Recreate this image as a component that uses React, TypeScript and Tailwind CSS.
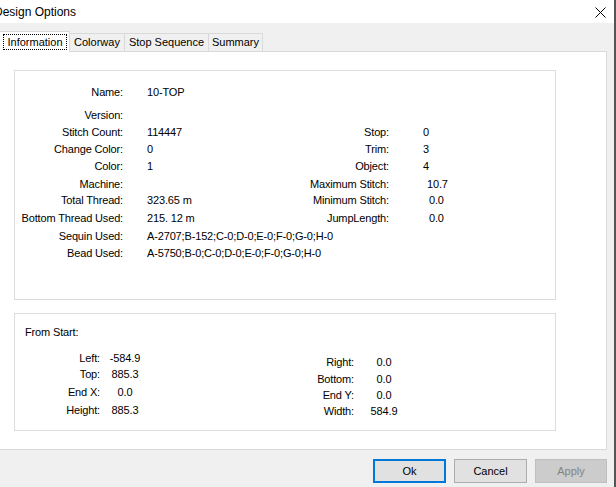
import React from "react";

const F = "font-[family-name:Liberation_Sans,Arial,sans-serif]";

type Row = { l: string; v: string; h: number; rl?: string; rv?: string; rvm?: number };

const rows: Row[] = [
  { l: "Name:", v: "10-TOP", h: 23 },
  { l: "Version:", v: "", h: 17 },
  { l: "Stitch Count:", v: "114447", h: 17, rl: "Stop:", rv: "0", rvm: 0 },
  { l: "Change Color:", v: "0", h: 17, rl: "Trim:", rv: "3", rvm: 0 },
  { l: "Color:", v: "1", h: 18, rl: "Object:", rv: "4", rvm: 0 },
  { l: "Machine:", v: "", h: 16, rl: "Maximum Stitch:", rv: "10.7", rvm: 4 },
  { l: "Total Thread:", v: "323.65 m", h: 18, rl: "Minimum Stitch:", rv: "0.0", rvm: 6 },
  { l: "Bottom Thread Used:", v: "215. 12 m", h: 18, rl: "JumpLength:", rv: "0.0", rvm: 6 },
  { l: "Sequin Used:", v: "A-2707;B-152;C-0;D-0;E-0;F-0;G-0;H-0", h: 17 },
  { l: "Bead Used:", v: "A-5750;B-0;C-0;D-0;E-0;F-0;G-0;H-0", h: 17 },
];

function CloseIcon() {
  return (
    <svg width="11" height="11" viewBox="0 0 11 11">
      <path d="M0.5 0.5 L10.5 10.5 M10.5 0.5 L0.5 10.5" stroke="#000" strokeWidth="1" fill="none" />
    </svg>
  );
}

export default function App() {
  return (
    <div className={`${F} w-[616px] h-[487px] bg-[#f0f0f0] border-r-2 border-[#555555] flex flex-col text-[11px] text-black overflow-hidden`}>
      {/* title bar */}
      <div className="h-[23px] bg-white flex items-center justify-between shrink-0">
        <span className="ml-[-6px] text-[12px] leading-none">Design Options</span>
        <span className="mr-[8px] mt-[1px] flex"><CloseIcon /></span>
      </div>

      {/* tabs */}
      <div className="h-[28px] flex items-end shrink-0">
        <div className="relative z-10 mb-[-1px] h-[21px] w-[70px] bg-white border-t border-r border-[#d9d9d9] flex items-start pt-[2px] pl-[3px]">
          <div className="border border-dotted border-black h-[16px] w-[64px] flex items-center justify-center leading-none">
            Information
          </div>
        </div>
        <div className="h-[18px] w-[55px] border-t border-r border-[#d9d9d9] flex items-center justify-center leading-none">Colorway</div>
        <div className="h-[18px] w-[84px] border-t border-r border-[#d9d9d9] flex items-center justify-center leading-none">Stop Sequence</div>
        <div className="h-[18px] w-[54px] border-t border-r border-[#d9d9d9] flex items-center justify-center leading-none">Summary</div>
      </div>

      {/* tab page */}
      <div className="w-[607px] h-[399px] bg-white border-t border-r border-b border-[#d9d9d9] shrink-0 flex flex-col pl-[14px] pt-[18px] tracking-[-0.15px]">
        {/* group 1 */}
        <div className="w-[542px] h-[230px] shrink-0 border border-[#dcdcdc] flex flex-col pt-[13px]">
          {rows.map((r, i) => (
            <div key={i} className="flex items-start leading-[17px]" style={{ height: r.h }}>
              <div className="w-[108px] text-right whitespace-nowrap">{r.l}</div>
              <div className="ml-[24px] w-[150px] whitespace-nowrap">{r.v}</div>
              {r.rl && (
                <>
                  <div className="w-[92px] text-right whitespace-nowrap">{r.rl}</div>
                  <div className="whitespace-nowrap" style={{ marginLeft: 34 + (r.rvm ?? 0) }}>{r.rv}</div>
                </>
              )}
            </div>
          ))}
        </div>

        {/* group 2 */}
        <div className="mt-[13px] w-[542px] h-[118px] shrink-0 border border-[#dcdcdc] flex flex-col pt-[10px]">
          <div className="pl-[10px] leading-[17px] h-[17px]">From Start:</div>
          <div className="flex">
            <div className="w-[131px] flex flex-col pt-[9px] leading-[17px]">
              <div className="flex h-[16px]"><div className="w-[85px] text-right">Left:</div><div className="ml-[5px] w-[40px] text-center">-584.9</div></div>
              <div className="flex h-[18px]"><div className="w-[85px] text-right">Top:</div><div className="ml-[5px] w-[40px] text-center">885.3</div></div>
              <div className="flex h-[18px]"><div className="w-[85px] text-right">End X:</div><div className="ml-[5px] w-[40px] text-center">0.0</div></div>
              <div className="flex h-[17px]"><div className="w-[85px] text-right">Height:</div><div className="ml-[5px] w-[40px] text-center">885.3</div></div>
            </div>
            <div className="ml-[148px] flex flex-col pt-[13px] leading-[17px]">
              <div className="flex h-[17px]"><div className="w-[60px] text-right">Right:</div><div className="ml-[10px] w-[40px] text-center">0.0</div></div>
              <div className="flex h-[16px]"><div className="w-[60px] text-right">Bottom:</div><div className="ml-[10px] w-[40px] text-center">0.0</div></div>
              <div className="flex h-[16px]"><div className="w-[60px] text-right">End Y:</div><div className="ml-[10px] w-[40px] text-center">0.0</div></div>
              <div className="flex h-[17px]"><div className="w-[60px] text-right">Width:</div><div className="ml-[10px] w-[40px] text-center">584.9</div></div>
            </div>
          </div>
        </div>
      </div>

      {/* buttons */}
      <div className="w-[607px] flex justify-end gap-[8px] mt-[9px]">
        <button className="w-[73px] h-[24px] border-2 border-[#0078d7] bg-[#e1e1e1] text-[11px] leading-none">Ok</button>
        <button className="w-[73px] h-[24px] border border-[#adadad] bg-[#e1e1e1] text-[11px] leading-none">Cancel</button>
        <button className="w-[72px] h-[24px] border border-[#bfbfbf] bg-[#cccccc] text-[#838383] text-[11px] leading-none">Apply</button>
      </div>
    </div>
  );
}
